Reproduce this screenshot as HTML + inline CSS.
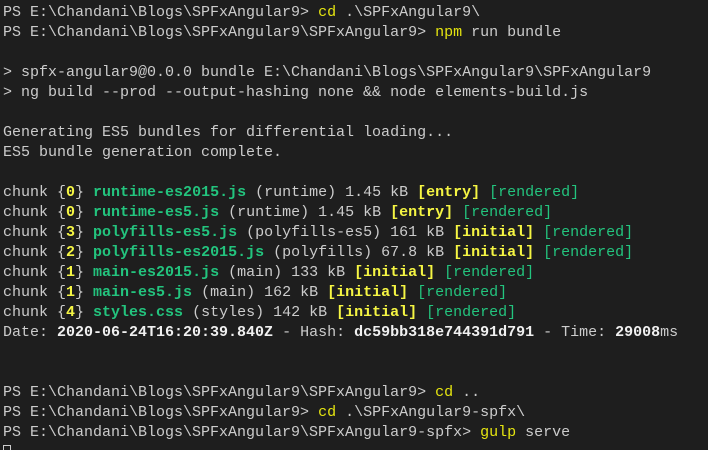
<!DOCTYPE html>
<html><head><meta charset="utf-8"><style>
html,body{margin:0;padding:0;background:#1e1e1e;width:708px;height:450px;overflow:hidden}
pre{margin:0;padding:3px 0 0 3px;font-family:"Liberation Mono",monospace;font-size:15px;line-height:20px;color:#cccccc;white-space:pre}
.y{color:#e5e510}
.b{color:#f0f0f0;font-weight:bold}
.by{color:#f5f543;font-weight:bold}
.g{color:#23c47e;font-weight:bold}
.gn{color:#23c47e}
.cur{display:inline-block;width:8px;height:13px;border:1px solid #ccc;box-sizing:border-box;vertical-align:-2px}
</style></head><body><pre>PS E:\Chandani\Blogs\SPFxAngular9&gt; <span class="y">cd</span> .\SPFxAngular9\
PS E:\Chandani\Blogs\SPFxAngular9\SPFxAngular9&gt; <span class="y">npm</span> run bundle

&gt; spfx-angular9@0.0.0 bundle E:\Chandani\Blogs\SPFxAngular9\SPFxAngular9
&gt; ng build --prod --output-hashing none &amp;&amp; node elements-build.js

Generating ES5 bundles for differential loading...
ES5 bundle generation complete.

chunk {<span class="by">0</span>} <span class="g">runtime-es2015.js</span> (runtime) 1.45 kB <span class="by">[entry]</span> <span class="gn">[rendered]</span>
chunk {<span class="by">0</span>} <span class="g">runtime-es5.js</span> (runtime) 1.45 kB <span class="by">[entry]</span> <span class="gn">[rendered]</span>
chunk {<span class="by">3</span>} <span class="g">polyfills-es5.js</span> (polyfills-es5) 161 kB <span class="by">[initial]</span> <span class="gn">[rendered]</span>
chunk {<span class="by">2</span>} <span class="g">polyfills-es2015.js</span> (polyfills) 67.8 kB <span class="by">[initial]</span> <span class="gn">[rendered]</span>
chunk {<span class="by">1</span>} <span class="g">main-es2015.js</span> (main) 133 kB <span class="by">[initial]</span> <span class="gn">[rendered]</span>
chunk {<span class="by">1</span>} <span class="g">main-es5.js</span> (main) 162 kB <span class="by">[initial]</span> <span class="gn">[rendered]</span>
chunk {<span class="by">4</span>} <span class="g">styles.css</span> (styles) 142 kB <span class="by">[initial]</span> <span class="gn">[rendered]</span>
Date: <span class="b">2020-06-24T16:20:39.840Z</span> - Hash: <span class="b">dc59bb318e744391d791</span> - Time: <span class="b">29008</span>ms


PS E:\Chandani\Blogs\SPFxAngular9\SPFxAngular9&gt; <span class="y">cd</span> ..
PS E:\Chandani\Blogs\SPFxAngular9&gt; <span class="y">cd</span> .\SPFxAngular9-spfx\
PS E:\Chandani\Blogs\SPFxAngular9\SPFxAngular9-spfx&gt; <span class="y">gulp</span> serve
<span class="cur"></span></pre></body></html>
